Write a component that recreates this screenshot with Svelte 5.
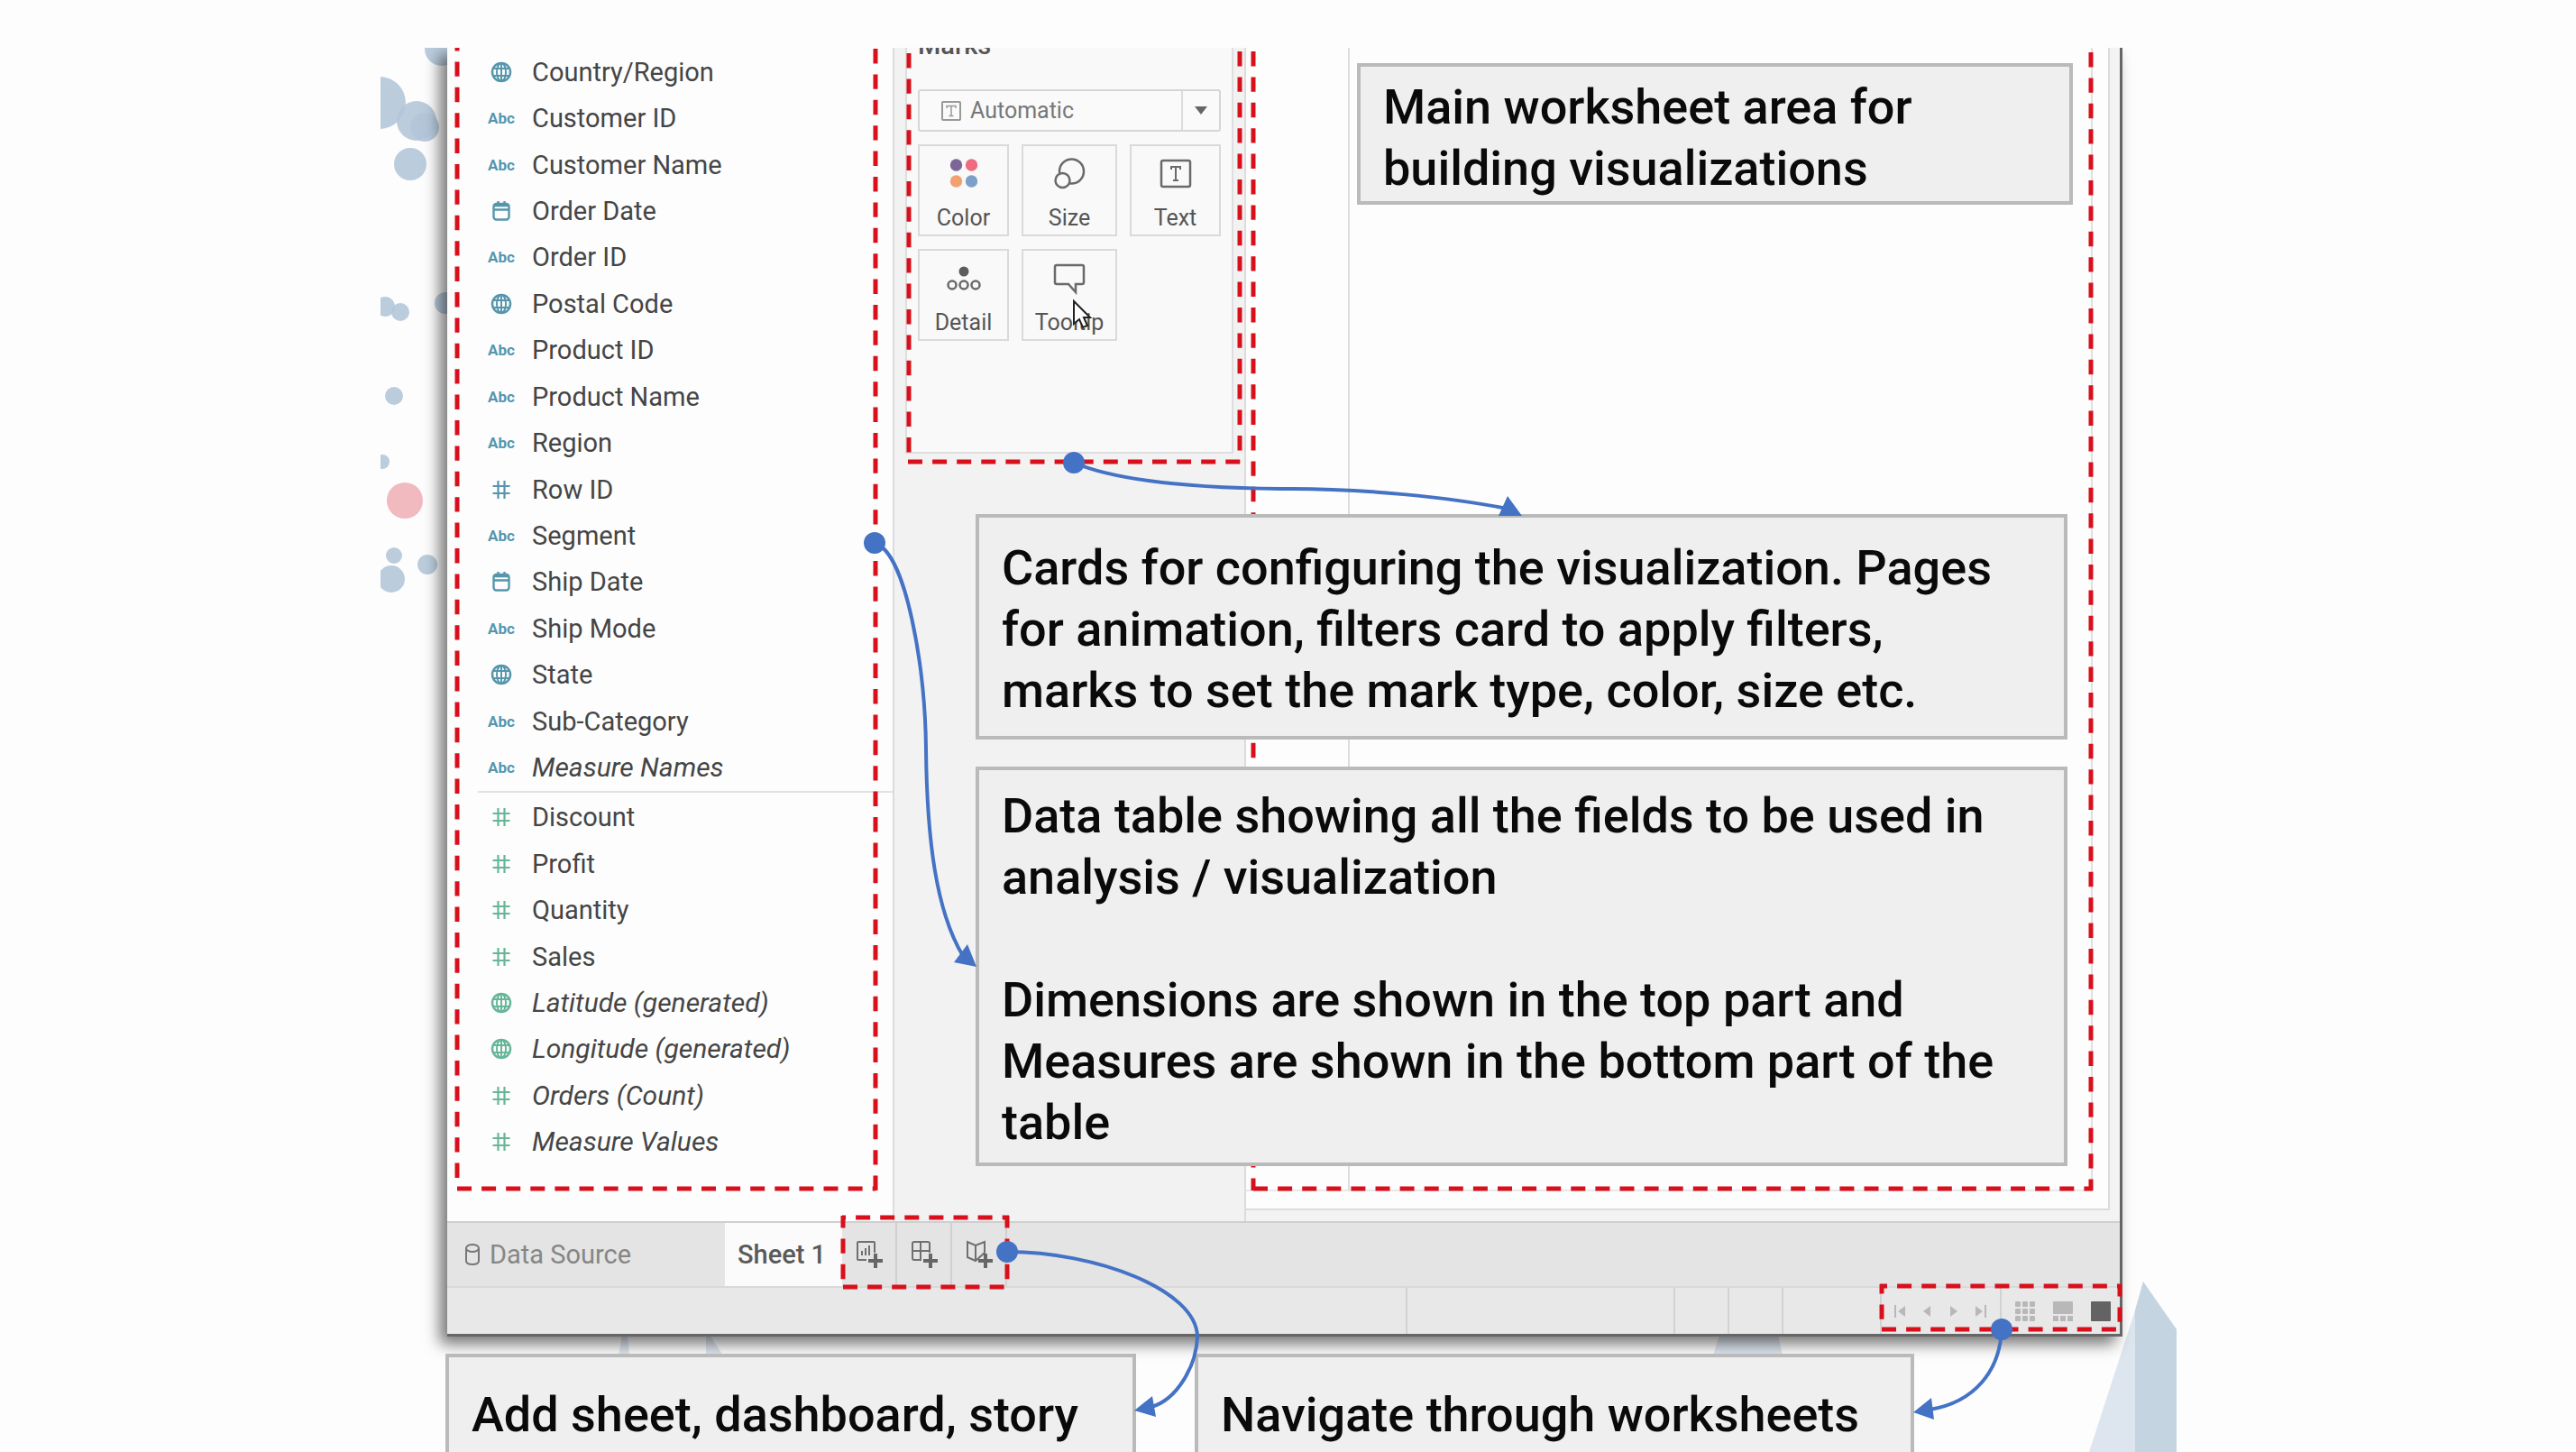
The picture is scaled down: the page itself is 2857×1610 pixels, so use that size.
<script>
  const dimensions = [
    { kind: 'globe', name: 'Country/Region' },
    { kind: 'abc', name: 'Customer ID' },
    { kind: 'abc', name: 'Customer Name' },
    { kind: 'date', name: 'Order Date' },
    { kind: 'abc', name: 'Order ID' },
    { kind: 'globe', name: 'Postal Code' },
    { kind: 'abc', name: 'Product ID' },
    { kind: 'abc', name: 'Product Name' },
    { kind: 'abc', name: 'Region' },
    { kind: 'hash', name: 'Row ID' },
    { kind: 'abc', name: 'Segment' },
    { kind: 'date', name: 'Ship Date' },
    { kind: 'abc', name: 'Ship Mode' },
    { kind: 'globe', name: 'State' },
    { kind: 'abc', name: 'Sub-Category' },
    { kind: 'abc', name: 'Measure Names', generated: true }
  ];

  const measures = [
    { kind: 'hash', name: 'Discount' },
    { kind: 'hash', name: 'Profit' },
    { kind: 'hash', name: 'Quantity' },
    { kind: 'hash', name: 'Sales' },
    { kind: 'globe', name: 'Latitude (generated)', generated: true },
    { kind: 'globe', name: 'Longitude (generated)', generated: true },
    { kind: 'hash', name: 'Orders (Count)', generated: true },
    { kind: 'hash', name: 'Measure Values', generated: true }
  ];

  const marks = ['Color', 'Size', 'Text', 'Detail', 'Tooltip'];
  const addTabs = ['sheet', 'dashboard', 'story'];
  const steps = ['First', 'Previous', 'Next', 'Last'];
  const views = ['Sheet sorter', 'Filmstrip', 'Show tabs'];
  const nine = [0, 1, 2, 3, 4, 5, 6, 7, 8];
</script>

{#snippet fieldList(fields, tone, label)}
  <ul class="fields {tone}" aria-label={label}>
    {#each fields as field}
      <li class:generated={field.generated}>
        <span class="kind">
          {#if field.kind === 'abc'}
            Abc
          {:else if field.kind === 'globe'}
            <svg width="24" height="24" viewBox="0 0 24 24" fill="none" stroke="currentColor" aria-hidden="true">
              <circle cx="12" cy="12" r="10" stroke-width="2.5" />
              <ellipse cx="12" cy="12" rx="5" ry="10" stroke-width="2" />
              <path d="M12 2v20M3 8h18M3 16h18" stroke-width="2" />
            </svg>
          {:else if field.kind === 'date'}
            <svg width="24" height="24" viewBox="0 0 24 24" fill="none" stroke="currentColor" stroke-width="2.4" aria-hidden="true">
              <rect x="3.5" y="4" width="17" height="17.5" rx="3" />
              <path d="M4 10.5h16M8.5 1v6M15.5 1v6M4 6h16" />
            </svg>
          {:else}
            <svg width="24" height="24" viewBox="0 0 24 24" fill="none" stroke="currentColor" stroke-width="2.2" aria-hidden="true">
              <path d="M8.5 2v20M15.5 2v20M2.5 8h19M2.5 16h19" />
            </svg>
          {/if}
        </span>
        <span>{field.name}</span>
      </li>
    {/each}
  </ul>
{/snippet}

<div class="page">
  <div class="stage">
    <svg class="backdrop" viewBox="422 53 1992 1557" preserveAspectRatio="none" aria-hidden="true">
      <g class="bubbles">
        <circle cx="421" cy="114" r="29" />
        <circle cx="462" cy="134" r="22" />
        <circle cx="471" cy="141" r="16" />
        <circle cx="455" cy="182" r="18" />
        <circle cx="490" cy="54" r="19" />
        <circle cx="427" cy="340" r="11" />
        <circle cx="444" cy="346" r="10" />
        <circle cx="494" cy="336" r="12" />
        <circle cx="437" cy="439" r="10" />
        <circle cx="424" cy="512" r="8" />
        <circle cx="437" cy="616" r="9" />
        <circle cx="434" cy="642" r="15" />
        <circle cx="474" cy="626" r="11" />
      </g>
      <circle class="pink" cx="449" cy="555" r="20" />
      <path class="shard-light" d="M686 1503L690 1480H696L698 1503ZM783 1503V1480H787L802 1503ZM1900 1503L1907 1480H1972L1977 1503Z" />
      <path class="shard-light" d="M2377 1421L2368 1453L2317 1610H2380Z" />
      <path class="shard-dark" d="M2377 1421L2414 1474V1610H2368V1453Z" />
    </svg>

    <main class="app">
      <div class="workspace">
        <section class="data-pane">
          {@render fieldList(dimensions, 'blue', 'Dimensions')}
          <hr />
          {@render fieldList(measures, 'green', 'Measures')}
        </section>

        <section class="shelf">
          <div class="marks-card">
            <h2>Marks</h2>
            <div class="mark-type">
              <svg width="22" height="22" viewBox="0 0 22 22" aria-hidden="true">
                <rect x="1" y="1" width="20" height="20" rx="1" fill="none" stroke="currentColor" stroke-width="2" />
                <path d="M6 8V5.5H16V8M11 5.5V16.5M8.5 16.5H13.5" fill="none" stroke="currentColor" stroke-width="1.5" />
              </svg>
              <select aria-label="Mark type">
                <option>Automatic</option>
              </select>
              <span class="arrow">
                <svg width="14" height="9" viewBox="0 0 14 9" aria-hidden="true"><path d="M0 0H14L7 9Z" fill="#666" /></svg>
              </span>
            </div>
            <div class="mark-grid">
              {#each marks as mark}
                <button type="button">
                  <svg width="40" height="40" viewBox="-20 -20 40 40" fill="none" stroke="#6a6a6a" stroke-width="2.5" aria-hidden="true">
                    {#if mark === 'Color'}
                      <g stroke="none">
                        <circle cx="-8.5" cy="-9" r="6.7" fill="#7c6698" />
                        <circle cx="8.5" cy="-9" r="6.7" fill="#ee6b80" />
                        <circle cx="-8.5" cy="9" r="6.7" fill="#f2a070" />
                        <circle cx="8.5" cy="9" r="6.7" fill="#7d9fc9" />
                      </g>
                    {:else if mark === 'Size'}
                      <circle cx="2.5" cy="-2" r="13.5" />
                      <circle cx="-7.5" cy="8" r="8" fill="#f9f9f9" />
                    {:else if mark === 'Text'}
                      <rect x="-16" y="-14" width="32" height="29" rx="2" />
                      <path d="M-5 -4V-7H5V-4M0 -7V8M-3 8H3" stroke-width="2" />
                    {:else if mark === 'Detail'}
                      <circle cx="0" cy="-7" r="5.5" fill="#5c5c5c" stroke="none" />
                      <circle cx="-13" cy="8" r="4.5" />
                      <circle cx="0" cy="8" r="4.5" />
                      <circle cx="13" cy="8" r="4.5" />
                    {:else}
                      <path d="M-14 -14H14Q16 -14 16 -12V5Q16 7 14 7H7V16L-1 7H-14Q-16 7 -16 5V-12Q-16 -14 -14 -14Z" />
                    {/if}
                  </svg>
                  <span>{mark}</span>
                </button>
              {/each}
            </div>
          </div>
        </section>

        <section class="sheet" aria-label="Worksheet">
          <div class="sheet-rows"></div>
          <div class="sheet-body"></div>
        </section>
      </div>

      <nav class="tabs" aria-label="Sheets">
        <button type="button" class="tab source">
          <svg width="18" height="26" viewBox="0 0 18 26" fill="none" stroke="#777" stroke-width="2" aria-hidden="true">
            <ellipse cx="9" cy="6" rx="7" ry="4" />
            <path d="M2 6V20Q2 24 9 24T16 20V6" />
          </svg>
          <span>Data Source</span>
        </button>
        <button type="button" class="tab current">Sheet 1</button>
        {#each addTabs as kind}
          <button type="button" class="tab add" aria-label="New {kind}">
            <svg width="30" height="32" viewBox="0 0 30 32" fill="none" stroke="#6f6f6f" stroke-width="2" aria-hidden="true">
              {#if kind === 'sheet'}
                <path d="M12 22H3Q2 22 2 21V3Q2 2 3 2H20Q21 2 21 3V14M7 12V17M11 9V17M15 6V17" />
              {:else if kind === 'dashboard'}
                <path d="M12 22H4Q2 22 2 20V4Q2 2 4 2H19Q21 2 21 4V14M2 12H21M11 2V22" />
              {:else}
                <path d="M21 14V2L11 6L2 2V19L11 23ZM11 6V23" />
              {/if}
              <path d="M22 15V31M14 23H30" stroke="#666" stroke-width="4" />
            </svg>
          </button>
        {/each}
      </nav>

      <footer class="status">
        <span class="cell grow"></span>
        <span class="cell wide"></span>
        <span class="cell"></span>
        <span class="cell"></span>
        <span class="cell gap"></span>
        <div class="cell steps">
          {#each steps as step}
            <button type="button" aria-label={step}>
              <svg width="14" height="14" viewBox="0 0 14 14" fill="currentColor" aria-hidden="true">
                {#if step === 'First'}
                  <path d="M1 0H3V14H1ZM13 1V13L5 7Z" />
                {:else if step === 'Previous'}
                  <path d="M11 1V13L3 7Z" />
                {:else if step === 'Next'}
                  <path d="M3 1V13L11 7Z" />
                {:else}
                  <path d="M11 0H13V14H11ZM1 1V13L9 7Z" />
                {/if}
              </svg>
            </button>
          {/each}
        </div>
        <div class="views">
          {#each views as view, v}
            <button type="button" aria-label={view}>
              <svg width="22" height="22" viewBox="0 0 22 22" fill="currentColor" aria-hidden="true">
                {#if v === 0}
                  {#each nine as n}
                    <rect x={(n % 3) * 8} y={Math.floor(n / 3) * 8} width="6" height="6" rx="1" />
                  {/each}
                {:else if v === 1}
                  <rect width="22" height="14" rx="1" />
                  <path d="M0 16H6V22H0ZM8 16H14V22H8ZM16 16H22V22H16Z" />
                {:else}
                  <rect width="22" height="22" rx="1" fill="#636363" />
                {/if}
              </svg>
            </button>
          {/each}
        </div>
      </footer>
    </main>

    <svg class="outlines" viewBox="422 53 1992 1557" preserveAspectRatio="none" aria-hidden="true">
      <g class="down">
        <path d="M507 53V1308" stroke-dashoffset="13" />
        <path d="M971 54V1320" />
        <path d="M1008 59V504" />
        <path d="M1375 57V504" />
        <path d="M1390 57V1320" />
        <path d="M2319 58V1320" />
        <path d="M935 1348V1425" stroke-dashoffset="3" />
        <path d="M1117 1348V1425" stroke-dashoffset="3" />
        <path d="M2087 1424V1472" stroke-dashoffset="6" />
        <path d="M2351 1424V1472" stroke-dashoffset="3" />
      </g>
      <g class="across">
        <path d="M507 1318H971" />
        <path d="M1007 512H1377" />
        <path d="M1390 1318H2321" />
        <path d="M934 1350H1119" stroke-dashoffset="12" />
        <path d="M935 1427H1117" />
        <path d="M2085 1426H2353" stroke-dashoffset="8" />
        <path d="M2087 1474H2351" />
      </g>
    </svg>

    <p class="note worksheet-note">Main worksheet area for<br />building visualizations</p>
    <p class="note cards-note">
      Cards for configuring the visualization. Pages<br />for animation, filters card to apply filters,<br />marks
      to set the mark type, color, size etc.
    </p>
    <p class="note data-note">
      Data table showing all the fields to be used in<br />analysis / visualization<br /><br />Dimensions are shown in
      the top part and<br />Measures are shown in the bottom part of the<br />table
    </p>
    <p class="note add-note">Add sheet, dashboard, story</p>
    <p class="note nav-note">Navigate through worksheets</p>

    <svg class="connectors" viewBox="422 53 1992 1557" preserveAspectRatio="none" aria-hidden="true">
      <g class="wires">
        <path d="M1191 513C1240 534 1330 541 1420 542C1510 541 1610 552 1672 564" />
        <path d="M970 602C1005 612 1026 740 1027 830C1028 930 1038 1010 1068 1060" />
        <path d="M1117 1388C1215 1388 1327 1430 1328 1482C1327 1515 1305 1552 1277 1560" />
        <path d="M2220 1474C2218 1520 2190 1555 2140 1563" />
      </g>
      <g class="ends">
        <circle cx="1191" cy="513" r="12" />
        <circle cx="970" cy="602" r="12" />
        <circle cx="1117" cy="1388" r="12" />
        <circle cx="2220" cy="1474" r="12" />
        <path d="M1688 572L1672 550L1662 572Z" />
        <path d="M1083 1072L1073 1047L1058 1067Z" />
        <path d="M1258 1564L1278 1548L1282 1571Z" />
        <path d="M2122 1566L2142 1550L2145 1574Z" />
      </g>
      <path class="cursor" d="M1191 334V359L1197 354L1201 363L1206 361L1202 352H1209Z" />
    </svg>
  </div>
</div>

<style>
  :global(body) {
    margin: 0;
    background: #fdfdfd;
  }

  .page {
    box-sizing: border-box;
    height: 100vh;
    min-height: 1600px;
    padding: 53px 443px 0 422px;
    font-family: Roboto, 'Liberation Sans', sans-serif;
    font-size: 29px;
    color: #454545;
  }

  .stage {
    position: relative;
    box-sizing: border-box;
    height: 100%;
    padding: 0 60px 128px 74px;
    overflow: hidden;
  }

  .backdrop,
  .outlines,
  .connectors {
    position: absolute;
    top: 0;
    left: 0;
    width: 100%;
    height: 100%;
    pointer-events: none;
  }

  .bubbles { fill: #b4c6d9; fill-opacity: 0.9; }
  .pink { fill: #f1babe; }
  .shard-light { fill: #dde5ee; }
  .shard-dark { fill: #c5d4e1; }

  button {
    margin: 0;
    padding: 0;
    border: 0;
    background: none;
    font: inherit;
    color: inherit;
  }

  .app {
    position: relative;
    box-sizing: border-box;
    height: 100%;
    display: flex;
    flex-direction: column;
    border-right: 3px solid #666;
    border-bottom: 3px solid #666;
    background: #f3f3f3;
    box-shadow: -8px 8px 16px rgba(0, 0, 0, 0.55);
  }

  .workspace {
    flex: 1;
    min-height: 0;
    display: flex;
    overflow: hidden;
  }

  .data-pane {
    flex: 0 0 496px;
    display: flex;
    flex-direction: column;
    box-sizing: border-box;
    padding: 1px 0 62px;
    background: #fdfdfd;
    border-right: 2px solid #dcdce0;
  }

  .fields {
    display: flex;
    flex-direction: column;
    margin: 0;
    padding: 0 0 0 38px;
    list-style: none;
  }

  .fields.blue { flex: 16; }
  .fields.green { flex: 8; }

  .fields li {
    flex: 1;
    display: flex;
    align-items: center;
    gap: 12px;
    line-height: 34px;
  }

  .generated {
    font-size: 30px;
    font-style: italic;
  }

  .kind {
    flex: 0 0 44px;
    display: flex;
    justify-content: center;
    font-size: 17px;
    font-weight: 700;
    font-style: normal;
  }

  .blue .kind { color: #5596ad; }
  .green .kind { color: #66b698; }

  hr {
    width: 460px;
    margin: 0 0 2px auto;
    border: 0;
    border-top: 2px solid #e2e2e4;
  }

  .shelf {
    flex: 0 0 390px;
    box-sizing: border-box;
    padding: 0 12px;
    border-right: 2px solid #dcdcdc;
    background: #f2f2f3;
  }

  .marks-card {
    box-sizing: border-box;
    height: 450px;
    padding: 0 12px;
    border: 2px solid #dedede;
    border-top: 0;
    background: #f9f9f9;
    overflow: hidden;
  }

  h2 {
    margin: -20px 0 32px;
    font-size: 29px;
    font-weight: 500;
    line-height: 34px;
    color: #555;
  }

  .mark-type {
    display: flex;
    align-items: center;
    box-sizing: border-box;
    height: 47px;
    padding-left: 24px;
    gap: 10px;
    border: 2px solid #d6d6d6;
    border-radius: 3px;
    background: #fafafa;
    color: #999;
  }

  select {
    flex: 1;
    min-width: 0;
    padding: 0;
    border: 0;
    appearance: none;
    background: none;
    font: inherit;
    font-size: 25px;
    color: #777;
  }

  .arrow {
    flex: 0 0 40px;
    align-self: stretch;
    display: flex;
    align-items: center;
    justify-content: center;
    border-left: 2px solid #dcdcdc;
  }

  .mark-grid {
    display: grid;
    grid-template-columns: 101fr 106fr 101fr;
    grid-auto-rows: 102px;
    gap: 14px;
    margin-top: 14px;
  }

  .mark-grid button {
    display: flex;
    flex-direction: column;
    align-items: center;
    gap: 15px;
    padding-top: 10px;
    border: 2px solid #dadada;
    background: #f9f9f9;
    font-size: 25px;
    line-height: 30px;
    color: #555;
  }

  .mark-grid svg { flex: none; }

  .sheet {
    flex: 1;
    display: flex;
    margin: 0 11px 12px 0;
    padding: 0 17px 19px 0;
    border: 2px solid #dcdcdc;
    border-top: 0;
    border-left: 0;
    background: #fdfdfd;
  }

  .sheet-rows {
    flex: 0 0 113px;
    border-right: 2px solid #dcdcdc;
    border-bottom: 2px solid #e8e8e8;
  }

  .sheet-body {
    flex: 1;
    border-right: 2px solid #e0e0e0;
    border-bottom: 2px solid #e8e8e8;
  }

  .tabs {
    flex: 0 0 74px;
    box-sizing: border-box;
    display: flex;
    border-top: 2px solid #cfcfcf;
    border-bottom: 2px solid #d9d9d9;
    background: #e4e4e4;
  }

  .tab {
    display: flex;
    align-items: center;
    justify-content: center;
    line-height: 34px;
  }

  .source {
    flex: 0 0 308px;
    justify-content: flex-start;
    gap: 10px;
    padding-left: 19px;
    color: #868686;
  }

  .current {
    flex: 0 0 130px;
    padding-right: 4px;
    background: #fbfbfb;
    font-weight: 500;
    color: #5a5a5a;
  }

  .add {
    flex: 0 0 61px;
    border-right: 2px solid #d0d0d0;
  }

  .status {
    flex: 0 0 51px;
    box-sizing: border-box;
    display: flex;
    background: #e8e8e8;
  }

  .cell {
    flex: 0 0 60px;
    box-sizing: border-box;
    border-right: 2px solid #d2d2d2;
  }

  .cell.grow { flex: 1; }
  .cell.wide { flex-basis: 297px; }
  .cell.gap { flex-basis: 109px; }

  .cell.steps {
    flex-basis: 133px;
    display: flex;
    padding-left: 5px;
  }

  .steps button,
  .views button {
    display: flex;
    align-items: center;
    justify-content: center;
    color: #b8b8b8;
  }

  .steps button { flex: 0 0 30px; }

  .views {
    flex: 0 0 131px;
    display: flex;
    box-sizing: border-box;
    padding-left: 5px;
  }

  .views button { flex: 0 0 42px; }

  .outlines path {
    fill: none;
    stroke: #d8101c;
    stroke-width: 5;
  }

  .down { stroke-dasharray: 16.4 12; }
  .across { stroke-dasharray: 16 11.1; }

  .wires {
    fill: none;
    stroke: #4472c4;
    stroke-width: 4;
  }

  .ends { fill: #4472c4; }

  .cursor {
    fill: #fff;
    stroke: #222;
    stroke-width: 2;
  }

  .note {
    position: absolute;
    display: flow-root;
    box-sizing: border-box;
    margin: 0;
    padding: 0 0 0 25px;
    border: 4px solid #bababa;
    background: #efefef;
    font-size: 54px;
    font-weight: 500;
    line-height: 68px;
    color: #0a0a0a;
    white-space: nowrap;
  }

  .worksheet-note {
    top: 17px;
    left: 1083px;
    width: 794px;
    height: 157px;
    padding-top: 11px;
  }

  .cards-note {
    top: 517px;
    left: 660px;
    width: 1211px;
    height: 250px;
    padding-top: 22px;
  }

  .data-note {
    top: 797px;
    left: 660px;
    width: 1211px;
    height: 443px;
    padding-top: 17px;
  }

  .add-note,
  .nav-note {
    top: 1448px;
    left: 72px;
    width: 766px;
    height: 130px;
    padding-top: 30px;
  }

  .nav-note {
    left: 903px;
    width: 798px;
  }
</style>
